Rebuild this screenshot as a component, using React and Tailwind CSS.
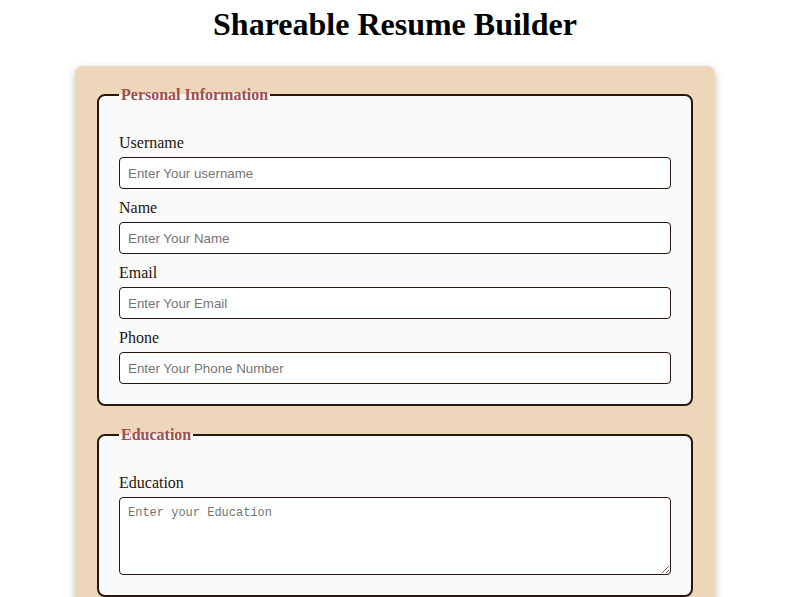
import React from "react";

const fields = [
  { label: "Username", placeholder: "Enter Your username" },
  { label: "Name", placeholder: "Enter Your Name" },
  { label: "Email", placeholder: "Enter Your Email" },
  { label: "Phone", placeholder: "Enter Your Phone Number" },
];

const Section = ({ title, children }) => (
  <fieldset className="mb-5 rounded-lg border-2 border-[#2a160c] bg-[#fafafa] px-5 pb-5 pt-[30px]">
    <legend className="px-[2px] text-[16px] font-bold leading-[18px] text-[#9e4f4f]">
      {title}
    </legend>
    <div className="flex flex-col gap-[10px]">{children}</div>
  </fieldset>
);

const App = () => {
  return (
    <div className="min-h-screen bg-white pr-[7px] pt-[6px] font-['Liberation_Serif',serif] text-[#24140c]">
      <h1 className="mb-6 text-center text-[32px] font-bold leading-[36px] text-black">
        Shareable Resume Builder
      </h1>

      <div className="mx-auto w-[640px] rounded-lg bg-[#eed6bb] px-[22px] py-5 shadow-[0_3px_8px_rgba(0,0,0,0.25)]">
        <Section title="Personal Information">
          {fields.map((f) => (
            <div key={f.label}>
              <label className="mb-[5px] block text-[16px] leading-[18px]">
                {f.label}
              </label>
              <input
                type="text"
                placeholder={f.placeholder}
                className="block h-[32px] w-full rounded border border-[#2a160c] bg-white px-2 font-['Liberation_Sans',sans-serif] text-[13.33px] placeholder:text-[#757575]"
              />
            </div>
          ))}
        </Section>

        <Section title="Education">
          <div>
            <label className="mb-[5px] block text-[16px] leading-[18px]">
              Education
            </label>
            <textarea
              placeholder="Enter your Education"
              className="block h-[78px] w-full rounded border border-[#2a160c] bg-white px-2 pb-[6px] pt-[8px] font-['Liberation_Mono',monospace] text-[12px] leading-[15px] placeholder:text-[#757575]"
            />
          </div>
        </Section>
      </div>
    </div>
  );
};

export default App;
